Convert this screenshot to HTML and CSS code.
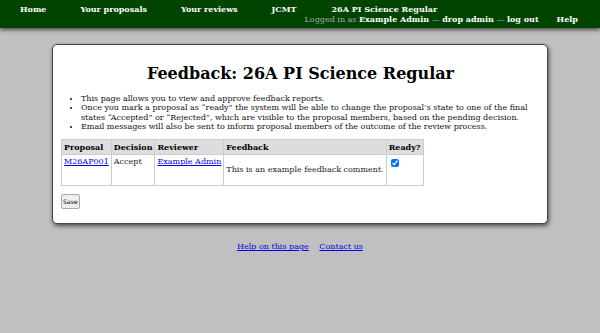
FILE: index.html
```html
<!DOCTYPE html>
<html lang="en">
<head>
  <meta charset="UTF-8" />
  <title>Feedback: 26A PI Science Regular</title>
  <link rel="stylesheet" href="styles.css">
</head>
<body>
  <!-- Top navigation -->
  <div id="nav">
    <a class="nav-item" href="#">Home</a>
    <a class="nav-item" href="#">Your proposals</a>
    <a class="nav-item" href="#">Your reviews</a>
    <a class="nav-item nav-jcmt" href="#">JCMT</a>
    <div class="nav-call">
      <a href="#">26A PI Science Regular</a>
      <div class="nav-user">Logged in as <a href="#">Example Admin</a> &mdash; <a href="#">drop admin</a> &mdash; <a href="#">log out</a></div>
    </div>
    <a class="nav-item nav-help" href="#">Help</a>
  </div>

  <!-- Main content -->
  <div id="main">
    <h1>Feedback: 26A PI Science Regular</h1>
    <ul class="notes">
      <li>This page allows you to view and approve feedback reports.</li>
      <li>Once you mark a proposal as &ldquo;ready&rdquo; the system will be able to change the proposal&rsquo;s state to one of the final states &ldquo;Accepted&rdquo; or &ldquo;Rejected&rdquo;, which are visible to the proposal members, based on the pending decision.</li>
      <li>Email messages will also be sent to inform proposal members of the outcome of the review process.</li>
    </ul>
    <form>
      <table>
        <tr>
          <th>Proposal</th>
          <th>Decision</th>
          <th>Reviewer</th>
          <th>Feedback</th>
          <th>Ready?</th>
        </tr>
        <tr>
          <td><a href="#">M26AP001</a></td>
          <td>Accept</td>
          <td><a href="#">Example Admin</a></td>
          <td class="comment"><p>This is an example feedback comment.</p></td>
          <td><input type="checkbox" checked /></td>
        </tr>
      </table>
      <p><button type="button" class="save">Save</button></p>
    </form>
  </div>

  <div id="footer">
    <a href="#">Help on this page</a>
    <a href="#">Contact us</a>
  </div>
</body>
</html>
```

FILE: styles.css
```css
body {
  margin: 0;
  background: #c0c0c0;
  font-family: 'DejaVu Serif', serif;
  font-size: 8px;
  color: #222;
}

a {
  color: #0000ee;
}

/* Top navigation */
#nav {
  display: flex;
  align-items: flex-start;
  height: 28px;
  padding: 4px 0 0 20px;
  box-sizing: border-box;
  background: #004400;
  box-shadow: 0 2px 4px rgba(0,0,0,0.6);
  font-weight: bold;
  line-height: 10px;
  white-space: nowrap;
}

#nav a {
  color: #fff;
  text-decoration: none;
}

.nav-item {
  margin-right: 34px;
}

#nav .nav-jcmt {
  margin-right: 8px;
}

.nav-call {
  display: flex;
  flex-direction: column;
  align-items: flex-start;
}

.nav-call > a {
  margin-left: 27px;
}

.nav-user {
  font-weight: normal;
  color: #aaa;
}

.nav-user a {
  font-weight: bold;
}

#nav .nav-help {
  margin: 10px 0 0 18px;
}

/* Main panel */
#main {
  margin: 16px 52px 0 52px;
  padding: 1px 7px 14px 8px;
  background: #fff;
  border: 1px solid #444;
  border-radius: 5px;
  box-shadow: 1px 2px 4px rgba(0,0,0,0.6);
}

h1 {
  text-align: center;
  font-size: 16px;
  margin: 18px 0 11px 0;
  color: #000;
}

.notes {
  margin: 0;
  padding-left: 20px;
  line-height: 9.3px;
  color: #111;
}

table {
  margin-top: 8px;
  border-collapse: collapse;
}

th, td {
  border: 1px solid #ccc;
  padding: 2px 2px;
  text-align: left;
  vertical-align: top;
  line-height: 10px;
}

th {
  background: #ddd;
  color: #000;
}

td {
  height: 26px;
}

td.comment p {
  margin: 8px 0 0 0;
}

td input {
  margin: 2px 0 0 2px;
  width: 8px;
  height: 8px;
}

form p {
  margin: 8px 0 0 0;
}

.save {
  font-family: 'DejaVu Sans', sans-serif;
  font-size: 6px;
  padding: 3px 1px;
  background: #eee;
  border: 1px solid #aaa;
  border-radius: 2px;
}

#footer {
  text-align: center;
  margin-top: 18px;
}

#footer a {
  margin: 0 4px;
}
```
